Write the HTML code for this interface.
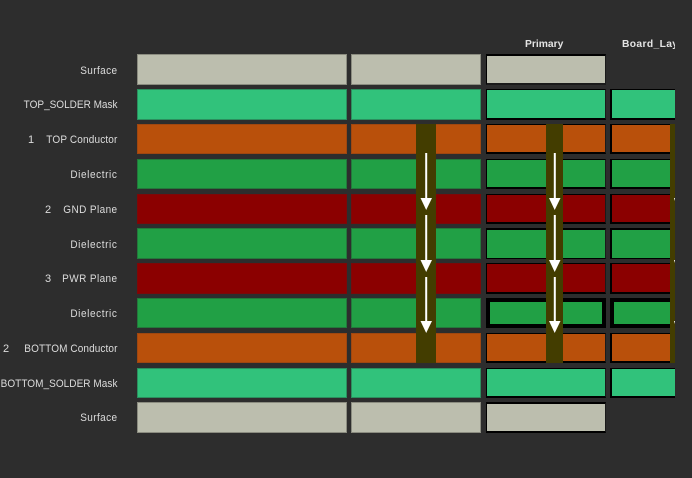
<!DOCTYPE html>
<html><head><meta charset="utf-8">
<style>
html,body{margin:0;padding:0;background:#2d2d2d}
#p{position:relative;width:692px;height:478px;overflow:hidden;background:#2d2d2d;font-family:"Liberation Sans",sans-serif}
.c{position:absolute;box-sizing:border-box}
.a{left:137px;width:210px}
.b{left:351px;width:130px}
.d{left:486px;width:120px;border:1px solid #000;border-bottom-width:2px;border-right-color:#1b1b1b}
.e{left:610px;width:65px;border:1px solid #000;border-left-width:2px;border-bottom-width:2px;border-right:0}
.s{background:#bcbeae}.m{background:#31c27b}.k{background:#b9500b}.g{background:#21a045}.r{background:#8b0000}
.a.s,.b.s{border:1px solid #8b8c80}.a.m,.b.m{border:1px solid #2b8f5e}.a.k,.b.k{border:1px solid #a04710}.a.g,.b.g{border:1px solid #23793b}.a.r,.b.r{border:1px solid #7c0808}
.l{position:absolute;left:-30px;width:147.5px;text-align:right;font-size:11px;line-height:14px;color:#dcdcdc;white-space:pre;transform:scaleX(.91);transform-origin:100% 50%}
.n{position:absolute;font-size:11px;line-height:14px;color:#dcdcdc}
.h{position:absolute;font-size:10.3px;font-weight:bold;line-height:14px;color:#e4e4e4;white-space:pre}
.bar{position:absolute;background:#433d00;top:124px;height:239px}
</style></head><body><div id="p">
<div class="h" style="left:525px;top:38px">Primary</div>
<div class="h" style="left:622px;top:38px;width:53px;overflow:hidden;letter-spacing:.35px">Board_Lay</div>

<div class="l" style="top:64px;letter-spacing:.44px">Surface</div>
<div class="l" style="top:98px">TOP_SOLDER Mask</div>
<div class="n" style="left:28px;top:133px">1</div>
<div class="l" style="top:133px;letter-spacing:.17px">TOP Conductor</div>
<div class="l" style="top:168px;letter-spacing:.66px">Dielectric</div>
<div class="n" style="left:45px;top:203px">2</div>
<div class="l" style="top:203px;letter-spacing:.44px">GND Plane</div>
<div class="l" style="top:238px;letter-spacing:.66px">Dielectric</div>
<div class="n" style="left:45px;top:272px">3</div>
<div class="l" style="top:272px;letter-spacing:.44px">PWR Plane</div>
<div class="l" style="top:307px;letter-spacing:.66px">Dielectric</div>
<div class="n" style="left:3px;top:342px">2</div>
<div class="l" style="top:342px;letter-spacing:.11px">BOTTOM Conductor</div>
<div class="l" style="top:377px;letter-spacing:.05px">BOTTOM_SOLDER Mask</div>
<div class="l" style="top:411px;letter-spacing:.44px">Surface</div>

<!-- column 1 -->
<div class="c a s" style="top:54px;height:31px"></div>
<div class="c a m" style="top:89px;height:31px"></div>
<div class="c a k" style="top:124px;height:30px"></div>
<div class="c a g" style="top:159px;height:30px"></div>
<div class="c a r" style="top:194px;height:30px"></div>
<div class="c a g" style="top:228px;height:31px"></div>
<div class="c a r" style="top:263px;height:31px"></div>
<div class="c a g" style="top:298px;height:30px"></div>
<div class="c a k" style="top:333px;height:30px"></div>
<div class="c a m" style="top:368px;height:30px"></div>
<div class="c a s" style="top:402px;height:31px"></div>

<!-- column 2 -->
<div class="c b s" style="top:54px;height:31px"></div>
<div class="c b m" style="top:89px;height:31px"></div>
<div class="c b k" style="top:124px;height:30px"></div>
<div class="c b g" style="top:159px;height:30px"></div>
<div class="c b r" style="top:194px;height:30px"></div>
<div class="c b g" style="top:228px;height:31px"></div>
<div class="c b r" style="top:263px;height:31px"></div>
<div class="c b g" style="top:298px;height:30px"></div>
<div class="c b k" style="top:333px;height:30px"></div>
<div class="c b m" style="top:368px;height:30px"></div>
<div class="c b s" style="top:402px;height:31px"></div>

<!-- column 3 -->
<div class="c d s" style="top:54px;height:31px;border-top-width:2px;border-bottom-color:#1b1b1b"></div>
<div class="c d m" style="top:89px;height:31px"></div>
<div class="c d k" style="top:124px;height:30px"></div>
<div class="c d g" style="top:159px;height:30px"></div>
<div class="c d r" style="top:194px;height:30px"></div>
<div class="c d g" style="top:228px;height:31px;border-top-width:2px;border-bottom-width:1px"></div>
<div class="c d r" style="top:263px;height:31px"></div>
<div class="c d g" style="top:298px;height:30px;border:4px solid #000"></div>
<div class="c d k" style="top:333px;height:30px"></div>
<div class="c d m" style="top:368px;height:30px"></div>
<div class="c d s" style="top:402px;height:31px;border-top-width:2px"></div>

<!-- column 4 -->
<div class="c e m" style="top:89px;height:31px"></div>
<div class="c e k" style="top:124px;height:30px"></div>
<div class="c e g" style="top:159px;height:30px"></div>
<div class="c e r" style="top:194px;height:30px"></div>
<div class="c e g" style="top:228px;height:31px;border-top-width:2px;border-bottom-width:1px"></div>
<div class="c e r" style="top:263px;height:31px"></div>
<div class="c e g" style="top:298px;height:30px;border-width:4px 0 4px 4px"></div>
<div class="c e k" style="top:333px;height:30px"></div>
<div class="c e m" style="top:368px;height:30px"></div>

<!-- via bars -->
<div class="bar" style="left:416px;width:20px"></div>
<div class="bar" style="left:546px;width:17px"></div>
<div class="bar" style="left:670px;width:5px"></div>

<!-- arrows -->
<svg style="position:absolute;left:0;top:0" width="692" height="478" viewBox="0 0 692 478">
<g fill="#fff" stroke="none">
<rect x="425.2" y="153" width="2" height="46"/><path d="M420.5 198H432L426.2 210Z"/>
<rect x="425.2" y="215" width="2" height="46"/><path d="M420.5 260H432L426.2 272Z"/>
<rect x="425.2" y="277" width="2" height="45"/><path d="M420.5 321H432L426.2 333Z"/>
<rect x="553.8" y="153" width="2" height="46"/><path d="M549 198H560.5L554.7 210Z"/>
<rect x="553.8" y="215" width="2" height="46"/><path d="M549 260H560.5L554.7 272Z"/>
<rect x="553.8" y="277" width="2" height="45"/><path d="M549 321H560.5L554.7 333Z"/>
<path d="M674 198H675V201Z"/><path d="M674 260H675V263Z"/><path d="M674 321H675V324Z"/>
</g></svg>
</div></body></html>
